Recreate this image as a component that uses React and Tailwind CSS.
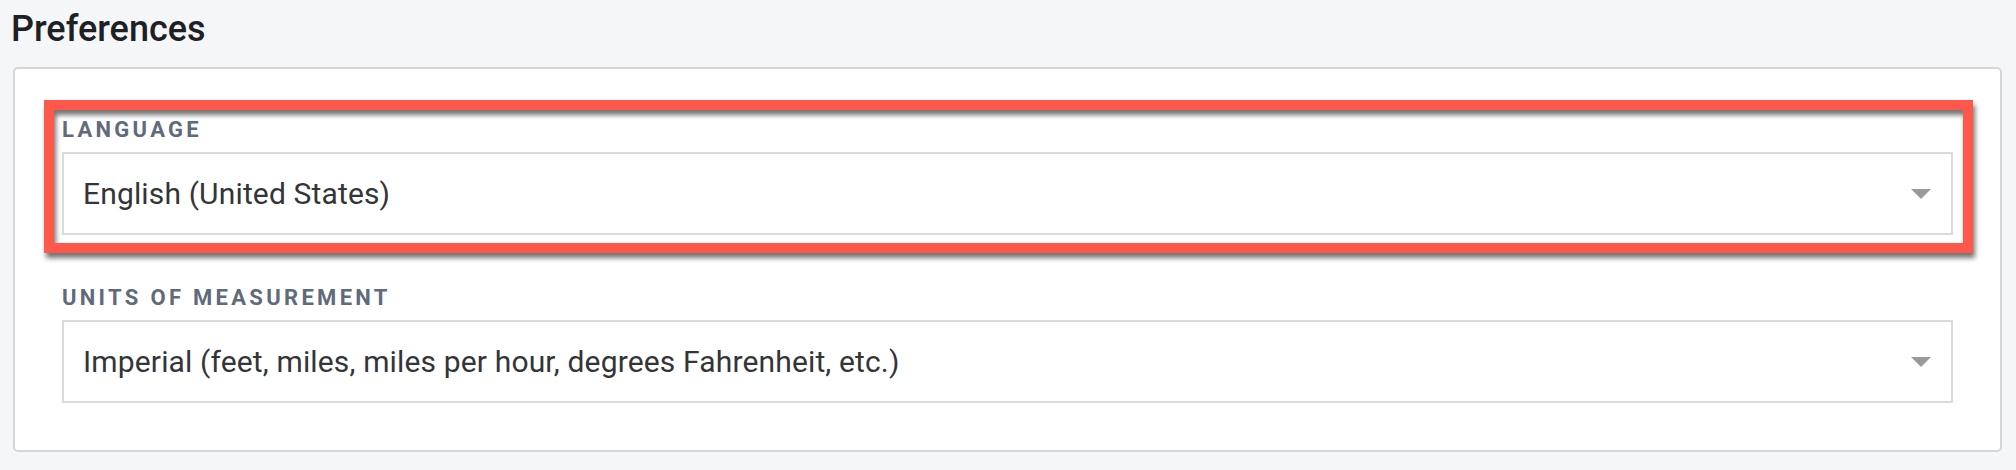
export default function App() {
  const font = { fontFamily: "Roboto, 'Noto Sans', Arial, sans-serif" };
  const Arrow = () => (
    <svg width="20" height="10" viewBox="0 0 20 10" className="shrink-0">
      <path d="M0 0 L20 0 L10 10 Z" fill="#9a9a9a" />
    </svg>
  );
  const Field = ({ label, value, highlight }) => (
    <div
      className={
        highlight
          ? "border-[10px] border-[#fd5849] pl-2 pr-[10px] pt-2 pb-2 shadow-[2px_5px_5px_rgba(0,0,0,0.55),inset_2px_5px_5px_rgba(0,0,0,0.55)]"
          : "border-[10px] border-transparent pl-2 pr-[10px] pt-2 pb-2"
      }
    >
      <div className="text-[22px] leading-[24px] font-bold tracking-[0.15em] text-[#5f6a7a] mb-[10px]">
        {label}
      </div>
      <div className="h-[83px] border-2 border-[#dadada] bg-white flex items-center justify-between pl-[19px] pr-[20px]">
        <span className="text-[30px] tracking-[0.15px] text-[#333538] leading-none">{value}</span>
        <Arrow />
      </div>
    </div>
  );
  return (
    <div className="w-[2016px] h-[470px] bg-[#f5f6f8] pl-[13px] pr-[14px] pt-[7px]" style={font}>
      <h1 className="text-[36px] leading-[44px] font-medium text-[#1d2024] ml-[-2px] mb-[16px]">
        Preferences
      </h1>
      <div className="bg-white border-2 border-[#d6d6d6] rounded-[5px] pl-[29px] pr-[27px] pt-[31px] pb-[29px] flex flex-col gap-[15px]">
        <Field label="LANGUAGE" value="English (United States)" highlight />
        <Field
          label="UNITS OF MEASUREMENT"
          value="Imperial (feet, miles, miles per hour, degrees Fahrenheit, etc.)"
        />
      </div>
    </div>
  );
}
